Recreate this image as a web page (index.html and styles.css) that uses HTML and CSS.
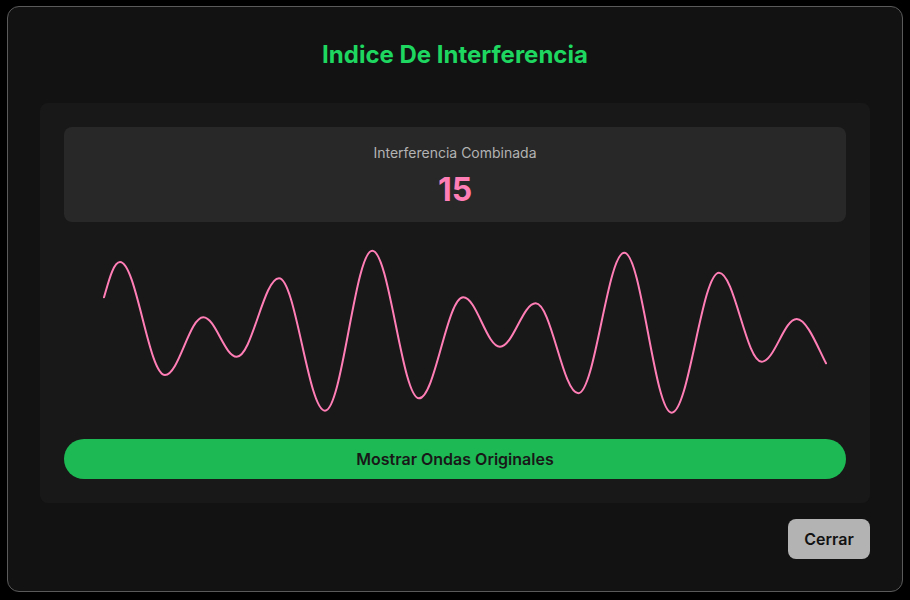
FILE: index.html
```html
<!DOCTYPE html>
<html lang="es">
<head>
<meta charset="utf-8">
<title>Indice De Interferencia</title>
<link rel="stylesheet" href="styles.css">
</head>
<body>
<div class="modal">
  <h2 class="title">Indice De Interferencia</h2>
  <div class="panel">
    <div class="stat">
      <div class="stat-label">Interferencia Combinada</div>
      <div class="stat-value">15</div>
    </div>
    <svg class="wave" width="782" height="185" viewBox="0 0 782 185">
      <path d="M 40,59.3 C 44,46 49,24 56,24
        C 72.4,24 84.6,137 101,137
        C 114.9,137 125.4,79.3 139.3,79.3
        C 151.5,79.3 160.5,118.7 172.7,118.7
        C 188.1,118.7 199.6,40.3 215,40.3
        C 231.7,40.3 244.3,172.7 261,172.7
        C 278.2,172.7 291.1,12.7 308.3,12.7
        C 325.3,12.7 338,160.3 355,160.3
        C 371.1,160.3 383.1,59.3 399.2,59.3
        C 412.6,59.3 422.6,108.7 436,108.7
        C 449,108.7 458.7,65.3 471.7,65.3
        C 487.2,65.3 498.8,155.3 514.3,155.3
        C 531,155.3 543.6,14.7 560.3,14.7
        C 577.6,14.7 590.4,174.7 607.7,174.7
        C 624.9,174.7 637.8,34.7 655,34.7
        C 670.5,34.7 682.2,123.7 697.7,123.7
        C 710.4,123.7 720,81 732.7,81
        C 743,81 754,110 762,125.3" fill="none" stroke="#ff7eb6" stroke-width="2" stroke-linecap="round" stroke-linejoin="round"/>
    </svg>
    <button class="btn-primary">Mostrar Ondas Originales</button>
  </div>
  <div class="footer">
    <button class="btn-close">Cerrar</button>
  </div>
</div>
</body>
</html>
```
FILE: styles.css
```css
* { box-sizing: border-box; }
html, body { margin: 0; padding: 0; }
body {
  width: 910px;
  height: 600px;
  background: #000;
  font-family: Inter, "Noto Sans", sans-serif;
  padding: 6px 7px;
  overflow: hidden;
}
.modal {
  width: 896px;
  height: 586px;
  background: #121212;
  border: 1px solid #5a5a5a;
  border-radius: 12px;
  padding: 32px;
  display: flex;
  flex-direction: column;
}
.title {
  margin: 0 0 32px;
  text-align: center;
  color: #1ed760;
  font-size: 24px;
  line-height: 32px;
  font-weight: 700;
}
.panel {
  background: #181818;
  border-radius: 8px;
  padding: 24px;
  display: flex;
  flex-direction: column;
  gap: 16px;
}
.stat {
  background: #282828;
  border-radius: 8px;
  padding: 16px;
  height: 95px;
  text-align: center;
}
.stat-label {
  color: #b3b3b3;
  font-size: 14px;
  line-height: 20px;
}
.stat-value {
  margin-top: 7px;
  color: #ff7eb6;
  font-size: 32px;
  line-height: 40px;
  font-weight: 700;
}
.wave { display: block; }
.btn-primary {
  height: 40px;
  border: none;
  border-radius: 20px;
  background: #1db954;
  color: #181818;
  font-family: inherit;
  font-size: 16px;
  font-weight: 600;
}
.footer {
  margin-top: 16px;
  display: flex;
  justify-content: flex-end;
}
.btn-close {
  width: 82px;
  height: 40px;
  border: none;
  border-radius: 8px;
  background: #b3b3b3;
  color: #121212;
  font-family: inherit;
  font-size: 16px;
  font-weight: 600;
}
```
